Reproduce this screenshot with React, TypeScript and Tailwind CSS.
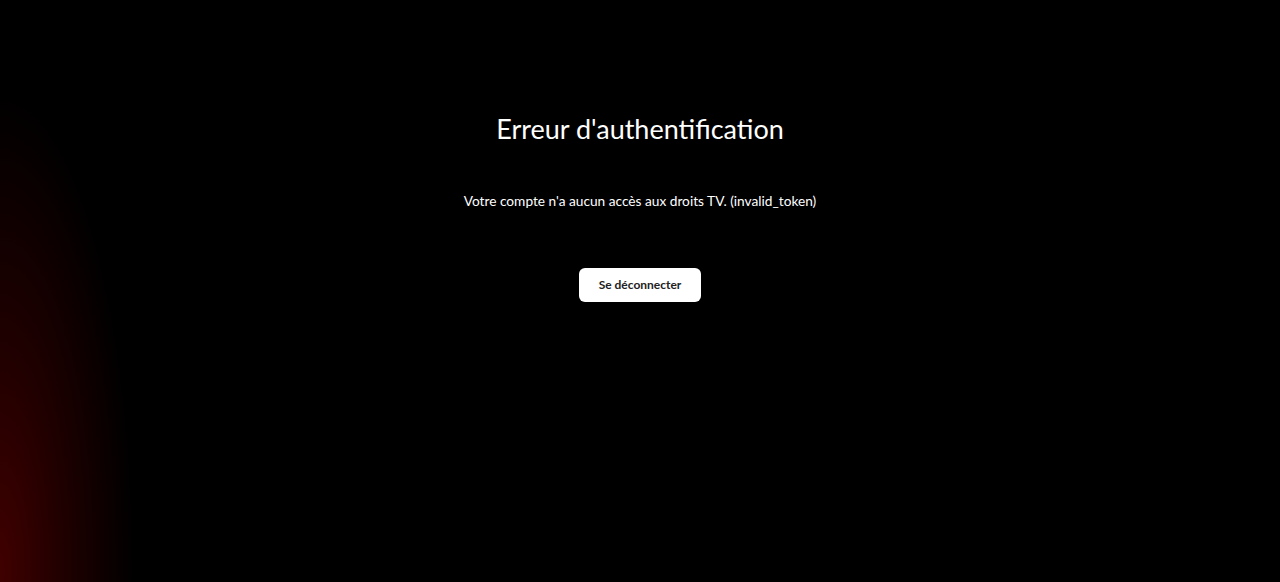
export default function App() {
  return (
    <div
      className="relative min-h-[582px] w-full overflow-hidden bg-black text-white"
      style={{ fontFamily: "Lato, 'Noto Sans', sans-serif" }}
    >
      <div className="pointer-events-none absolute left-[-135px] top-[90px] h-[960px] w-[270px] rounded-full bg-[radial-gradient(closest-side,rgba(64,0,0,1),rgba(44,0,0,0.75)_45%,rgba(0,0,0,0)_100%)]" />
      <div className="relative flex flex-col items-center pt-[111px]">
        <h1 className="text-[27px] leading-[36px] font-normal">Erreur d'authentification</h1>
        <p className="mt-[44px] text-[13.7px] leading-[20px]">
          Votre compte n'a aucun accès aux droits TV. (invalid_token)
        </p>
        <button
          type="button"
          className="mt-[57px] h-[34px] w-[122px] rounded-[6px] bg-white text-[12px] font-bold text-[#222]"
        >
          Se déconnecter
        </button>
      </div>
    </div>
  )
}
